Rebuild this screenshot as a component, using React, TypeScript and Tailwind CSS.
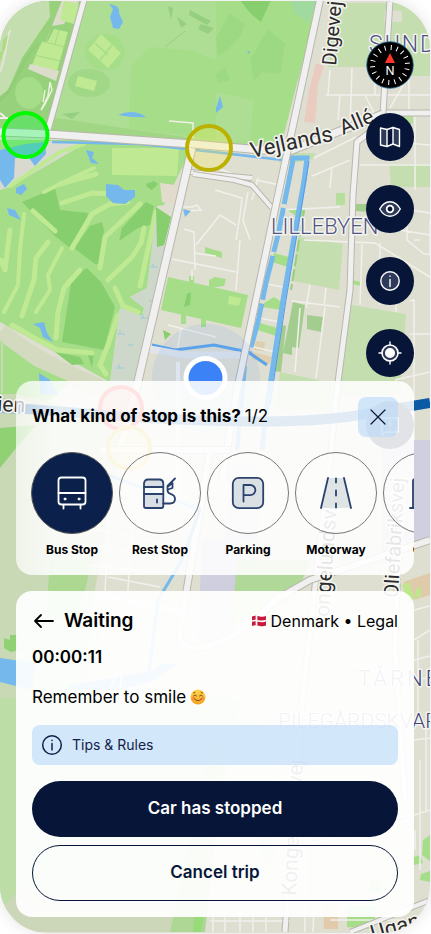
import type { ReactNode } from "react";

const ROAD = "#f0f0f0";
const CASING = "#bab7ad";

function Road({ d, w }: { d: string; w: number }) {
  return (
    <g fill="none" strokeLinejoin="round">
      <path d={d} stroke={CASING} strokeWidth={w + 2} />
      <path d={d} stroke={ROAD} strokeWidth={w} />
    </g>
  );
}

function MapLabel({ x, y, size, rotate = 0, color = "#2b2b2b", weight = 400, spacing = 0, children }: {
  x: number; y: number; size: number; rotate?: number; color?: string; weight?: number; spacing?: number; children: string;
}) {
  return (
    <text
      x={x}
      y={y}
      transform={`rotate(${rotate} ${x} ${y})`}
      fontSize={size}
      fontWeight={weight}
      fill={color}
      stroke="#f4f4ef"
      strokeWidth="3"
      strokeLinejoin="round"
      paintOrder="stroke"
      letterSpacing={spacing}
      fontFamily="Roboto, 'Noto Sans', sans-serif"
    >
      {children}
    </text>
  );
}

function MapBackground() {
  return (
    <svg className="absolute inset-0 h-full w-full" viewBox="0 1 430 932" preserveAspectRatio="xMidYMid slice" aria-hidden="true">
      <rect y="1" width="430" height="932" fill="#dfdfd1" />

      {/* north-west park */}
      <path d="M0 0H84L46 132H0Z" fill="#97d17c" />
      <path d="M0 0H49L50 17L22 58L8 90L0 96Z" fill="#c5deb0" />
      <path d="M62 0H80L64 24L52 26Z" fill="#dcdccb" />
      <path d="M64 1L79 4L74 24L60 20Z" fill="#c0e994" />
      <path d="M54 29L68 32L57 71L32 65L38 50L42 42L48 41Z" fill="#c0e994" />
      <path d="M34 55L60 61M41 41L65 47M50 30L46 42M59 30L55 44" stroke="#a5d885" fill="none" />
      <path d="M30 64L59 71L56 81L28 69Z" fill="#dcdccb" />
      <ellipse cx="29" cy="93" rx="14" ry="16" fill="#a5dd88" />
      <path d="M0 100C18 86 20 60 38 44" stroke="#8bc772" strokeWidth="3" fill="none" opacity=".5" />
      <path d="M10 30C4 50 6 58 0 72" stroke="#e4e5d8" strokeWidth="2" fill="none" />
      <path d="M0 52L4 50L0 62ZM3 40L8 35L5 50L2 52Z" fill="#a9dd7f" />
      <path d="M50 82L48 96L41 110L45 104L52 90ZM45 90L43 102" fill="none" stroke="#eaf2de" strokeWidth="1.5" />
      <path d="M0 113L5 117M0 118L8 118" stroke="#eef0e8" strokeWidth="2" />

      {/* central park */}
      <path d="M85 0H321L277 152L48 132Z" fill="#aedd94" />
      <path d="M131 66L150 47L192 51L216 60V140L129 128Z" fill="#a5dd88" />
      <path d="M216 0H318L281 146L216 140Z" fill="#a5dd88" />
      <path d="M240 0H271L261 22L250 13Z" fill="#87cf6e" />
      <path d="M216 38L230 13L245 24L240 37L228 49L218 56ZM250 60L268 29L285 43L280 74L262 72L254 81ZM216 75L225 67L230 80L218 83Z" fill="#9cd982" />
      <path d="M216 92L254 100L250 140L216 143Z" fill="#aedd94" />
      <path d="M290 0H318L309 23L294 13Z" fill="#9fd9ad" opacity=".6" />
      <path d="M177 17L187 24L181 28ZM168 6L173 8L171 20ZM190 10L211 21L207 25L189 15ZM201 24L214 28L208 34L198 29Z" fill="#97cf80" />
      <path d="M52 118L70 120L190 138L188 142L48 134Z" fill="#a0d684" />
      <path d="M62 114L80 112L72 119Z" fill="#97cf80" />
      <ellipse cx="105" cy="52" rx="20" ry="18" fill="#a5dd88" />
      <ellipse cx="89" cy="83" rx="21" ry="14" fill="#a1d887" />
      <path d="M101 34L121 53L108 68L88 50Z" fill="#c0e994" />
      <path d="M95 43L108 55M112 45L100 60" stroke="#a5dd88" strokeWidth="1.5" />
      <path d="M78 76L97 81L94 91L75 86Z" fill="#c0e994" />
      <path d="M109 4C117 5 120 8 119 13L123 22L119 29L113 28L110 17L113 9Z" fill="#75b8ec" />
      <path d="M118 115Q133 108 146 117Q135 118 118 115Z" fill="#75b8ec" />
      <path d="M220 96L223 107L216 113L216 108Z" fill="#75b8ec" />
      <path d="M247 52L250 51L249 54M274 138L283 136L280 145Z" fill="#75b8ec" />
      <path d="M169 121L193 123V138" stroke="#f0f1e6" strokeWidth="1.5" fill="none" />
      <path d="M165 47L185 31" stroke="#99cd82" fill="none" />

      {/* golf course */}
      <path d="M0 140H88L192 147L164 205L157 206L147 288L130 297L144 308L142 316L120 308L110 382L0 322Z" fill="#a5dd88" />
      <path d="M0 150L50 141L84 144L10 187L0 190Z" fill="#d8dad0" />
      <path d="M0 150L25 144L45 142L46 154L35 166L29 158H15L14 178L5 188L0 180Z" fill="#75b8ec" />
      <path d="M112 148H179L177 176L112 175Z" fill="#c0e994" />
      <path d="M22 202L55 188L60 210L88 213L84 232L70 248L55 236ZM90 226L102 222L104 230L100 264L95 264L74 248ZM122 228L146 202L154 206L150 225L138 228L119 241Z" fill="#87cf6e" />
      <path d="M72 276L87 268L101 282L115 307L104 350L62 342ZM157 210L171 217L164 245L157 247ZM55 352L80 357L84 364L72 365ZM146 184L154 181L158 184L152 190L147 187ZM88 355L94 353L92 368Z" fill="#87cf6e" />
      <g fill="none" stroke="#c0e994" strokeLinecap="round" strokeLinejoin="round" strokeWidth="5">
        <path d="M10 186L60 152L84 144M44 192L72 178L94 168" strokeWidth="4" />
        <path d="M62 203L92 193L122 194M60 184L96 174" />
        <path d="M72 248L92 214L110 204L128 202M100 268L105 237L140 204M108 280L132 257L141 243L144 228M156 212L150 240L140 286" />
        <path d="M33 211L55 231M10 230L5 270L1 260M48 242L36 258L34 280L22 316M80 270L64 288L58 312L56 338M115 288L123 306L138 312M12 325L38 340L58 350L92 353M118 315L108 345L100 365L106 374" />
        <path d="M24 214L20 250L18 285L4 312M62 248L48 275L50 290L36 312" strokeWidth="4" />
      </g>
      <path d="M86 150L94 152L92 158L99 164L91 163ZM16 188L24 184L27 189L21 195L16 193ZM106 184L118 185L124 190L135 190L135 197L125 204L113 203L106 196ZM7 208L15 210L21 220L9 215ZM33 324L44 322L47 333L53 342L43 337L40 328Z" fill="#75b8ec" />
      <path d="M157 206L147 288L130 297L144 308L142 316L120 308L110 382L140 386L168 245L157 247Z" fill="#cdd8cb" />
      <path d="M156 207L171 217L164 245L157 247Z" fill="#87cf6e" />
      <path d="M150 267h8m-5-3v3M140 318h8m-5-4v4M117 334h8m-5-4v4M116 368h8m-5-4v4M149 300l4 2M128 345h5" stroke="#9dcbd8" />
      <path d="M0 332C40 365 72 375 140 406" stroke="#d3dabf" strokeWidth="18" fill="none" />
      <path d="M0 341L34 366L70 382L48 402H0Z" fill="#a5dd88" />
      <path d="M2 340V393" stroke="#c8d9b5" strokeWidth="2" />
      <path d="M39 373L50 380L59 395L40 394Z" fill="#75b8ec" />

      {/* blocks around the canal */}
      <path d="M168 277L248 295L241 328L161 310ZM205 247L222 252V258L205 253ZM215 277L226 279L224 286L209 288V280Z" fill="#a5dd88" />
      <path d="M189 276h5v7h-5ZM181 314h5v10h-5ZM201 317h5v10h-5Z" fill="#a5dd88" />
      <path d="M187 294L191 292L190 305L184 307ZM163 330L171 334L165 340Z" fill="#87cf6e" />
      <path d="M229 296L241 298L239 306L228 304Z" fill="#c0e994" />
      <path d="M274 253L289 257L288 267L272 262ZM264 303L274 297L283 303L281 310L263 307ZM260 323L277 328L276 336L258 330ZM285 209L305 210L303 220Z" fill="#a5dd88" />
      <path d="M298 237L343 244L339 290L293 281ZM346 304L406 314L400 395H337ZM280 372L332 383L330 410H275Z" fill="#c5deb0" />
      <path d="M293 302L305 305L299 348L292 347V355L283 353ZM307 315L323 317L321 332L307 329ZM282 325L286 326L281 372L274 371ZM354 204H372L368 212L355 211Z" fill="#a3cd8f" />
      <path d="M347 279L361 282V286L347 283Z" fill="#a5dd88" />
      <path d="M256 341L265 342L264 351L254 350ZM253 352L272 357L270 364L252 359Z" fill="#dfcfae" />
      <path d="M335 3H430V67H328Z" fill="#c5deb0" />
      <path d="M385 10L402 11V22H384ZM352 67L430 67V190H350Z" fill="#dfdfd1" />
      <path d="M395 59H430V76H396ZM389 164H430V187H391Z" fill="#c5deb0" />
      <path d="M394 116H413V124L396 123ZM336 193H345V205H336Z" fill="#b6de9c" />
      <path d="M316 63L324 66L318 84L317 100L315 123L304 122L309 90Z" fill="#eacbc0" />
      <path d="M281 153H315L313 159L285 165L279 163Z" fill="#c5deb0" />
      <path d="M160 183L190 187L180 205L162 202Z" fill="#e2dccd" />

      {/* minor streets */}
      <g stroke="#f1f0ec" strokeWidth="1.5" fill="none">
        <path d="M326 95H430M352 68L350 130M375 68V95M328 95L330 70M340 95L338 120M365 95L375 115M314 158L356 137M312 176L350 160M332 167L330 188M360 165H430M409 80V113M415 115V190M390 108L405 82M365 140L430 145" />
        <path d="M304 240L375 243L396 256M292 301L340 307M310 285L306 308M326 288L324 305M300 308L295 372M325 307L316 378M362 244L360 305M380 243V305M396 260V312M396 256L430 277M407 210V240L424 254H430M414 240L420 240M400 230L430 235M410 301L414 300V440M395 380L430 372M410 334H430M380 205L430 213M430 220V255" />
        <path d="M184 229L194 232L195 270M172 259L236 272M194 253L216 256M192 270L192 280M196 245L220 215L236 225M215 190L242 198L240 215L236 240M248 192L243 220L250 240M258 178L252 200M240 240L236 290M168 325L216 337M181 329L177 352M280 210L340 207M256 180L290 187M260 283L283 287M254 317L280 322M250 346L275 352" />
        <path d="M183 207H192L197 205L201 210L188 211M210 180L216 168L237 175L240 184" />
      </g>

      {/* water channels */}
      <path d="M52 142L140 144L214 152L283 160" stroke="#75b8ec" strokeWidth="2.5" fill="none" />
      <path d="M287 158H307L304 181L283 300L267 405L262 450" stroke="#75b8ec" strokeWidth="5" fill="none" />
      <path d="M309 161L305 186L286 300L270 405" stroke="#5699e8" strokeWidth="1" fill="none" />
      <path d="M293 160L278 235L266 283L258 322L249 354" stroke="#75b8ec" strokeWidth="5" fill="none" strokeDasharray="45 4" />
      <path d="M152 345L175 350L214 345L248 352L267 365" stroke="#5ba4ea" strokeWidth="3" fill="none" />
      <path d="M245 366L237 450" stroke="#75b8ec" strokeWidth="4" fill="none" />
      <path d="M183 209L191 211L185 217Z" fill="#75b8ec" />
      <path d="M304 210L291 290" stroke="#99ce7e" strokeWidth="2" strokeDasharray="12 3" fill="none" />

      {/* southern districts */}
      <path d="M0 394H16L125 420L95 590L60 932H0Z" fill="#c9d9b6" />
      <path d="M0 428L36 425L16 448L0 468Z" fill="#8fd173" />
      <path d="M50 560H92L78 620H46Z" fill="#add892" />
      <path d="M4 638L10 640V635L17 635L20 650L11 652L4 648Z" fill="#8fd173" />
      <path d="M0 658L35 663L32 690L0 682Z" fill="#75b8ec" />
      <path d="M72 685L155 670L160 664L178 664L150 682L118 690L64 690Z" fill="#75b8ec" />
      <path d="M0 698H240L200 932H170L0 910Z" fill="#bcdda5" />
      <path d="M0 910L20 890L175 905L170 932H0Z" fill="#cbd7b8" />
      <path d="M175 910L210 740L225 750L205 932H170Z" fill="#aed694" />
      <path d="M205 910L201 932H193L195 910Z" fill="#97dc79" />
      <path d="M382 440H430V543L382 562ZM202 540H240L233 640H198ZM228 465H258V540H225Z" fill="#cfcfdf" />
      <path d="M237 560H310L295 600L232 620Z" fill="#b0d898" />
      <path d="M403 582L430 573V595L415 600Z" fill="#dfcbaa" />
      <path d="M402 585L409 582L415 598L408 603ZM416 588H421V597H416Z" fill="#bde68d" />
      <path d="M323 905L338 900V929H324Z" fill="#e2cbaa" />
      <path d="M347 906H376L374 929L347 927ZM414 857L420 855L423 863L414 865ZM423 840L430 835V861L422 855ZM421 874L430 871V882L420 880ZM372 880L382 882L380 892H369Z" fill="#a5dd88" />
      <path d="M258 840L270 838L277 860L265 864Z" fill="#c5deb0" />
      <g stroke="#f1f0ec" strokeWidth="1.5" fill="none">
        <path d="M109 500L103 640M135 500L120 690M108 577L160 587M95 545L163 560M90 565L162 573M98 530L170 545M105 595L165 611M135 632L106 700M414 610L430 606M414 640L430 630M418 640V720M414 660L430 656M410 680L430 678M414 740L430 738M420 760V870M426 720V810M414 815L430 810M415 830V850" />
        <path d="M210 921H290M213 905V932M225 905V932M240 905V932M253 905V932M266 905V932M305 840V932M316 850L313 932M230 700L410 650M230 740L405 690M300 640L410 610M235 790L320 770M330 920H400" />
      </g>

      {/* main roads */}
      <Road d="M252 178L190 172" w={4} />
      <Road d="M193 174L234 180L252 185L272 208" w={4} />
      <Road d="M430 113H383L375 128L357 142L353 195L350 290L337 390L328 480L318 560L300 720L285 932" w={5} />
      <Road d="M390 0L383 113" w={5} />
      <Road d="M84 0L48 130" w={5} />
      <Road d="M0 132L48 134L192 144L287 152L383 114" w={7} />
      <Road d="M192 148L136 390L120 450" w={7} />
      <Road d="M320 0L277 200L237 390L222 480" w={6} />
      <path d="M150 349L184 355L240 355" stroke="#e1e5eb" strokeWidth="7" fill="none" />
      <path d="M178 362V500" stroke={ROAD} strokeWidth="4" fill="none" />
      <Road d="M100 450H230M210 450L180 630Q178 650 200 648Q240 640 275 600L310 580L430 540" w={6} />
      <path d="M95 594L182 612" stroke={ROAD} strokeWidth="5" />
      <Road d="M398 560L395 650L405 800" w={5} />
      <Road d="M285 850L410 820" w={3} />
      <Road d="M350 932L430 900" w={4} />
      <path d="M108 475L200 510L182 560L158 600L148 680" stroke="#75b8ec" strokeWidth="3" fill="none" />
      <path d="M0 407L80 413Q290 430 370 413L430 403" stroke="#0a5aa6" strokeWidth="10" fill="none" />
      <path d="M0 407L17 408" stroke="#9bbad1" strokeWidth="12" fill="none" />

      <MapLabel x={336} y={66} size={20} rotate={-85}>Digevej</MapLabel>
      <MapLabel x={252} y={158} size={22} rotate={-12}>Vejlands</MapLabel>
      <MapLabel x={343} y={135} size={21} rotate={-23}>Allé</MapLabel>
      <MapLabel x={369} y={52} size={23} weight={300} color="#4f5583" spacing={2}>SUNDBY</MapLabel>
      <MapLabel x={271} y={234} size={22} weight={300} color="#4f5583">LILLEBYEN</MapLabel>
      <MapLabel x={-3} y={411} size={21} rotate={3}>ien</MapLabel>
      <MapLabel x={328} y={630} size={21} rotate={-86}>Kongelundsvej</MapLabel>
      <MapLabel x={398} y={598} size={20} rotate={-87}>Oliefabriksvej</MapLabel>
      <MapLabel x={296} y={896} size={21} rotate={-87}>Kongelundsvej</MapLabel>
      <MapLabel x={358} y={686} size={22} weight={300} color="#3f4679" spacing={3}>TÅRNBY</MapLabel>
      <MapLabel x={278} y={728} size={21} weight={300} color="#3f4679">PILEGÅRDSKVARTER</MapLabel>
      <MapLabel x={373} y={941} size={22} rotate={-16}>Ugandavej</MapLabel>

      {/* stop markers and current position */}
      <circle cx="25.500" cy="135" r="22" fill="#00ff40" fillOpacity=".3" stroke="#00f800" strokeWidth="4" />
      <circle cx="209" cy="148" r="22" fill="#fff04a" fillOpacity=".25" stroke="#bdb100" strokeWidth="4" />
      <circle cx="121" cy="408" r="21" fill="#ff2020" fillOpacity=".25" stroke="#ff1515" strokeWidth="4" />
      <circle cx="129" cy="448" r="21" fill="#fff04a" fillOpacity=".25" stroke="#e7bd20" strokeWidth="4" />
      <circle cx="206" cy="378" r="54" fill="#6699ee" fillOpacity=".13" />
      <circle cx="205.500" cy="378" r="22" fill="#fff" />
      <circle cx="205.500" cy="378" r="17" fill="#3b82f6" />
    </svg>
  );
}

function MapButton({ label, children }: { label: string; children: ReactNode }) {
  return (
    <button type="button" aria-label={label} className="grid size-12 place-items-center rounded-full bg-[#071638]">
      <svg className="size-6" viewBox="-12 -12 24 24" fill="none" stroke="#fff" strokeWidth="1.4" strokeLinecap="round" strokeLinejoin="round" aria-hidden="true">
        {children}
      </svg>
    </button>
  );
}

const ticks = Array.from({ length: 18 }, (_, i) => i * 20 + 4);

function MapControls() {
  return (
    <div className="absolute right-4 top-10 flex flex-col gap-6">
      <button type="button" aria-label="Compass" className="size-12">
        <svg className="size-12" viewBox="-24 -24 48 48" aria-hidden="true">
          <circle r="23.300" fill="#000" stroke="#2a6f9e" strokeWidth=".8" />
          {ticks.map((a) => (
            <path key={a} d="M0 -20V-15" stroke="#fff" strokeWidth="1" transform={`rotate(${a})`} />
          ))}
          <path d="M0 -12L5 -2H-5Z" fill="#ff352b" />
          <text y="10" textAnchor="middle" fontSize="12" fill="#fff" fontFamily="Inter, sans-serif">N</text>
        </svg>
      </button>
      <MapButton label="Map layers">
        <path d="M-9.500 -9L-3 -7.500V9.500L-9.500 8ZM3 -9.500L9.500 -7.500V9.500L3 7Z" fill="#2e3a5a" />
        <path d="M-3 -7.500L3 -9.500M-3 9.500L3 7" />
      </MapButton>
      <MapButton label="View">
        <path d="M-10.300 0C-7.500 -5 -4 -7.200 0 -7.200S7.500 -5 10.300 0C7.500 5 4 7.200 0 7.200S-7.500 5 -10.300 0Z" fill="#2e3a5a" />
        <circle r="3.300" fill="#071638" strokeWidth="1.800" />
      </MapButton>
      <MapButton label="Information">
        <circle r="9.200" fill="#2e3a5a" />
        <path d="M0 -1.500V5.500M0 -5V-4.700" />
      </MapButton>
      <MapButton label="My location">
        <circle r="8" fill="#2e3a5a" strokeWidth="1.600" />
        <circle r="4.300" fill="#fff" />
        <path d="M0 -11V-8M0 8V11M-11 0H-8M8 0H11" />
      </MapButton>
      <MapButton label="Report">
        <path d="M-8 -7H8V7H-4L-8 10ZM0 -4V1M0 4V4.300" />
      </MapButton>
    </div>
  );
}

const stops: { label: string; active?: boolean; icon: ReactNode }[] = [
  {
    label: "Bus Stop",
    active: true,
    icon: (
      <>
        <rect x="-13.500" y="-15.500" width="27" height="27" rx="3" />
        <path d="M-13.500 0H13.500M-8.500 12V15.500M8.500 12V15.500" />
        <circle cx="-7" cy="6" r="1" fill="currentColor" strokeWidth="1" />
        <circle cx="7" cy="6" r="1" fill="currentColor" strokeWidth="1" />
      </>
    ),
  },
  {
    label: "Rest Stop",
    icon: (
      <>
        <path d="M-16 -6V-9.500Q-15.500 -13.500 -12 -13.500H0Q3.300 -13 3.300 -9.500V-6ZM-16 1H3.300V13Q3.300 15 1.300 15H-14Q-16 15 -16 13Z" fill="#d9dfe4" />
        <path d="M-16 -6V1M3.300 -6V1M-3 6.500V9.500M3.300 10.500H10Q15 10.500 15 6Q15 2 10.500 0.800Q7.500 0 7.500 -3V-7L15 -14.500M8 -6.500L12.500 -10V-5L8 -3.500" />
      </>
    ),
  },
  {
    label: "Parking",
    icon: (
      <>
        <rect x="-15.200" y="-15.200" width="30.400" height="30.400" rx="6" fill="#dbe0e4" />
        <path d="M-4.500 8.500V-8H2.300A5 5 0 0 1 2.300 2.200H-4.500" />
      </>
    ),
  },
  {
    label: "Motorway",
    icon: (
      <>
        <path d="M-8 -15H8L15 15H-15Z" fill="#dfe4e5" stroke="none" />
        <path d="M-8 -15L-15 15M8 -15L15 15M0 -14.500V-10.500M0 -2.500V2.500M0 10.500V14.500" />
      </>
    ),
  },
  {
    label: "Gas",
    icon: (
      <>
        <path d="M-11 15V-12Q-11 -14 -9 -14H3Q5 -14 5 -12V15" fill="#dbe0e4" />
        <path d="M-14 15H8M5 0H9V10H13V-8L8 -12" />
      </>
    ),
  },
];

function StopPicker() {
  return (
    <section className="overflow-hidden rounded-2xl bg-linear-to-r from-white/70 via-white/88 via-10% to-white/88 pt-4 pb-[15px]">
      <div className="flex items-center justify-between px-4">
        <h2 className="text-[17px] font-bold">
          What kind of stop is this? <span className="font-normal">1/2</span>
        </h2>
        <button type="button" aria-label="Close" className="grid size-10 place-items-center rounded-lg bg-[#b7d8f8]/60">
          <svg className="size-4" viewBox="0 0 16 16" stroke="#0b1736" strokeWidth="1.2" strokeLinecap="round" aria-hidden="true">
            <path d="M1 1L15 15M15 1L1 15" />
          </svg>
        </button>
      </div>
      <ul className="mt-[15px] flex gap-1.5 overflow-x-auto pl-[15px] [scrollbar-width:none]">
        {stops.map((s) => (
          <li key={s.label} className="shrink-0">
            <button type="button" aria-pressed={!!s.active} className="flex w-[82px] flex-col items-center gap-1.5">
              <span
                className={
                  s.active
                    ? "grid size-[82px] place-items-center rounded-full border border-[#555] bg-[#0b214b] text-white"
                    : "grid size-[82px] place-items-center rounded-full border border-[#777] bg-white/30 text-[#2b416e]"
                }
              >
                <svg className="size-9" viewBox="-18 -18 36 36" fill="none" stroke="currentColor" strokeWidth="1.800" strokeLinecap="round" strokeLinejoin="round" aria-hidden="true">
                  {s.icon}
                </svg>
              </span>
              <span className="text-xs leading-5 font-bold">{s.label}</span>
            </button>
          </li>
        ))}
      </ul>
    </section>
  );
}

function DenmarkFlag() {
  return (
    <svg className="h-3 w-4" viewBox="0 0 16 12" role="img" aria-label="Danish flag">
      <path d="M1 1.500Q4 0 8 1.200T15 1V10.500Q12 12 8 10.800T1 11Z" fill="#c8193c" />
      <path d="M1 6Q4 5 8 6T15 5.500M5.500 1V10.500" stroke="#fff" strokeWidth="1.700" fill="none" />
    </svg>
  );
}

function SmileEmoji() {
  return (
    <svg className="size-4" viewBox="0 0 16 16" role="img" aria-label="Smiling face">
      <defs>
        <linearGradient id="face" x2="0" y2="1">
          <stop stopColor="#ffd94d" />
          <stop offset="1" stopColor="#f5a126" />
        </linearGradient>
      </defs>
      <circle cx="8" cy="8" r="7.500" fill="url(#face)" />
      <circle cx="3.500" cy="9.500" r="2" fill="#f47b3b" opacity=".55" />
      <circle cx="12.500" cy="9.500" r="2" fill="#f47b3b" opacity=".55" />
      <path d="M3.500 6.800Q5 4.800 6.500 6.800M9.500 6.800Q11 4.800 12.500 6.800M4.500 10Q8 13.500 11.500 10M3.500 4L5 3.200M12.500 4L11 3.200" stroke="#7b4514" strokeWidth=".9" strokeLinecap="round" fill="none" />
    </svg>
  );
}

function TripPanel() {
  return (
    <section className="rounded-2xl bg-white/93 p-4">
      <div className="flex h-7 items-center justify-between">
        <div className="flex items-center gap-2">
          <button type="button" aria-label="Back" className="size-6">
            <svg className="size-6" viewBox="0 0 24 24" fill="none" stroke="#000" strokeWidth="1.800" strokeLinecap="round" strokeLinejoin="round" aria-hidden="true">
              <path d="M21 12H3M9 6L3 12L9 18" />
            </svg>
          </button>
          <h2 className="text-[19px] font-semibold">Waiting</h2>
        </div>
        <p className="flex items-center gap-1 text-base">
          <DenmarkFlag />
          Denmark • Legal
        </p>
      </div>
      <p className="mt-2 text-[17px] leading-7 font-semibold">00:00:11</p>
      <p className="mt-3.5 flex items-center gap-1 text-[17px] leading-6">
        Remember to smile <SmileEmoji />
      </p>
      <button type="button" className="mt-4 flex h-10 w-full items-center gap-2 rounded-lg bg-[#b7d8f8]/60 px-2 text-sm text-[#13224a]">
        <svg className="size-6" viewBox="-12 -12 24 24" fill="none" stroke="currentColor" strokeWidth="1.500" strokeLinecap="round" aria-hidden="true">
          <circle r="9.300" />
          <path d="M0 -1.500V5M0 -4.800V-4.500" />
        </svg>
        Tips &amp; Rules
      </button>
      <button type="button" className="mt-4 h-14 w-full rounded-full bg-[#071638] text-[17px] font-semibold text-white">Car has stopped</button>
      <button type="button" className="mt-2 h-14 w-full rounded-full border border-[#071638] text-[17px] font-semibold text-[#071638]">Cancel trip</button>
    </section>
  );
}

export default function App() {
  return (
    <div className="h-screen bg-white py-px pr-px font-['Inter','Liberation_Sans',sans-serif] text-black">
      <main className="relative flex h-full flex-col justify-end overflow-hidden rounded-[48px] shadow-[0_0_16px_rgba(0,0,0,0.12)]">
        <MapBackground />
        <MapControls />
        <div className="relative flex flex-col gap-4 p-4">
          <StopPicker />
          <TripPanel />
        </div>
      </main>
    </div>
  );
}
